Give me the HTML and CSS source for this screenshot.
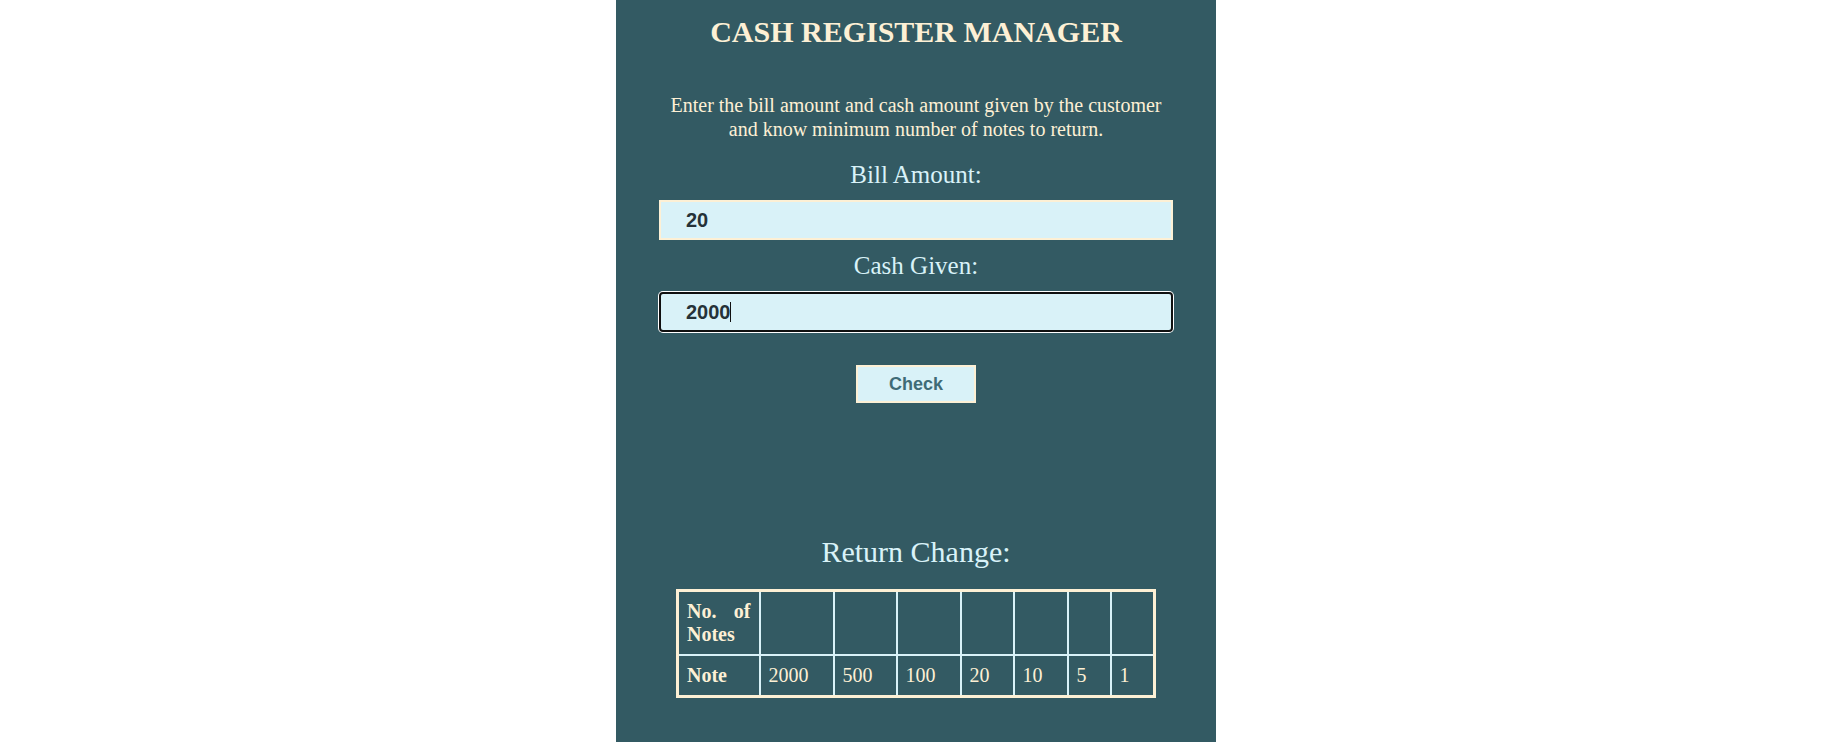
FILE: index.html
```html
<!DOCTYPE html>
<html lang="en">
<head>
<meta charset="utf-8">
<title>Cash Register Manager</title>
<link rel="stylesheet" href="styles.css">
</head>
<body>
<main class="panel">
  <h1 class="title">CASH REGISTER MANAGER</h1>
  <p class="intro">Enter the bill amount and cash amount given by the customer and know minimum number of notes to return.</p>

  <label class="field-label" for="bill">Bill Amount:</label>
  <input class="field-input" id="bill" type="number" value="20">

  <label class="field-label" for="cash">Cash Given:</label>
  <div class="input-wrap">
    <input class="field-input field-input--focused" id="cash" type="number" value="2000">
    <span class="caret"></span>
  </div>

  <button class="check-btn" type="button">Check</button>

  <h2 class="result-title">Return Change:</h2>

  <table class="change-table">
    <colgroup>
      <col class="c1"><col class="c2"><col class="c3"><col class="c4"><col class="c5"><col class="c6"><col class="c7"><col class="c8">
    </colgroup>
    <tr>
      <th>No. of Notes</th>
      <td></td><td></td><td></td><td></td><td></td><td></td><td></td>
    </tr>
    <tr>
      <th>Note</th>
      <td>2000</td><td>500</td><td>100</td><td>20</td><td>10</td><td>5</td><td>1</td>
    </tr>
  </table>
</main>
</body>
</html>
```

FILE: styles.css
```css
html, body {
  margin: 0;
  padding: 0;
  background: #ffffff;
}

body {
  padding-right: 2px;
}

.panel {
  box-sizing: border-box;
  width: 600px;
  min-height: 100vh;
  margin: 0 auto;
  padding: 15px 0 40px;
  background: #335a63;
  display: flex;
  flex-direction: column;
  align-items: center;
  font-family: "Liberation Serif", "Times New Roman", serif;
  font-size: 20px;
  color: #fdf0d5;
}

.title {
  margin: 0;
  font-size: 30px;
  line-height: 34px;
  font-weight: bold;
  color: #fdf0d5;
}

.intro {
  width: 510px;
  margin: 44px 0 0;
  font-size: 20px;
  line-height: 24px;
  text-align: center;
  color: #fdf0d5;
}

.field-label {
  display: block;
  margin: 20px 0 11px;
  font-size: 25px;
  line-height: 28px;
  color: #d9f2f8;
}

.field-input + .field-label {
  margin-top: 12px;
}

.field-input {
  box-sizing: border-box;
  width: 514px;
  height: 40px;
  margin: 0;
  padding: 0 25px;
  border: 2px solid #fdf0d5;
  border-radius: 0;
  background: #d9f2f8;
  font-family: "Liberation Sans", Arial, sans-serif;
  font-size: 20px;
  font-weight: bold;
  color: #263238;
  outline: none;
  -moz-appearance: textfield;
  appearance: textfield;
}

.field-input::-webkit-outer-spin-button,
.field-input::-webkit-inner-spin-button {
  -webkit-appearance: none;
  margin: 0;
}

.input-wrap {
  position: relative;
  margin-top: 1px;
}

.field-input--focused {
  border-color: #101010;
  border-radius: 4px;
  box-shadow: 0 0 0 1px #ffffff;
}

.caret {
  position: absolute;
  left: 71px;
  top: 10px;
  width: 1px;
  height: 20px;
  background: #101010;
}

.check-btn {
  box-sizing: border-box;
  width: 120px;
  height: 38px;
  margin-top: 33px;
  padding: 0;
  border: 2px solid #fdf0d5;
  background: #d9f2f8;
  font-family: "Liberation Sans", Arial, sans-serif;
  font-size: 18px;
  font-weight: bold;
  color: #3f6b76;
  cursor: pointer;
}

.result-title {
  margin: 132px 0 0;
  font-size: 30px;
  line-height: 34px;
  font-weight: normal;
  color: #d9f2f8;
}

.change-table {
  width: 477px;
  margin-top: 20px;
  border-collapse: collapse;
  table-layout: fixed;
  border: 3px solid #fdf0d5;
  font-size: 20px;
  line-height: 23px;
  color: #fdf0d5;
}

.change-table th,
.change-table td {
  border: 2px solid #d9f2f8;
  padding: 8px;
  text-align: justify;
  vertical-align: middle;
}

.change-table th {
  font-weight: bold;
}

.c1 { width: 82px; }
.c2 { width: 74px; }
.c3 { width: 63px; }
.c4 { width: 64px; }
.c5 { width: 53px; }
.c6 { width: 54px; }
.c7 { width: 43px; }
.c8 { width: 44px; }
```
